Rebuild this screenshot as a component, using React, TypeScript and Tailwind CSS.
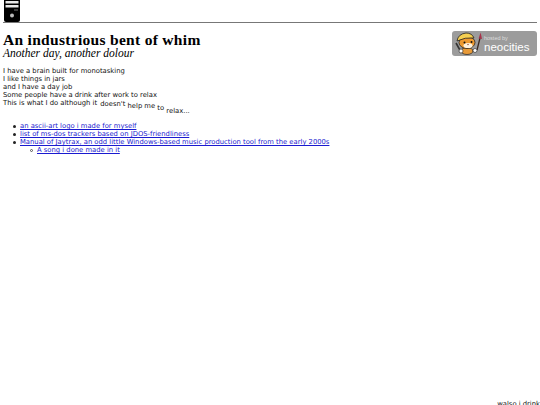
import React from 'react';

const links = [
  'an ascii-art logo i made for myself',
  'list of ms-dos trackers based on JDOS-friendliness',
  'Manual of Jaytrax, an odd little Windows-based music production tool from the early 2000s',
];

const TowerIcon = () => (
  <svg width="16" height="22" viewBox="0 0 16 22" className="ml-[1px] block">
    <path d="M0 0H16V20Q16 22 14 22H2Q0 22 0 20Z" fill="#000" />
    <rect x="1.5" y="1" width="13" height="2.5" fill="#e8e8e8" />
    <rect x="1.5" y="5" width="13" height="2.5" fill="#e8e8e8" />
    <rect x="10" y="9.5" width="4" height="1" fill="#777" />
    <circle cx="8" cy="15.5" r="2" fill="#bbb" />
  </svg>
);

const NeocitiesBadge = () => (
  <div className="flex h-[25px] w-[85px] items-center rounded-[3px] bg-[#9c9c9c]">
    <svg width="32" height="25" viewBox="0 0 32 25" className="shrink-0">
      {/* wrench */}
      <path d="M4 12L9 21" stroke="#333" strokeWidth="1.6" />
      {/* brush */}
      <path d="M25 19L28 7" stroke="#3a2a22" strokeWidth="1.3" />
      <path d="M26.6 7.5L28.6 1.5L30 8Z" fill="#a8324a" />
      {/* body */}
      <ellipse cx="15" cy="20" rx="6" ry="3.5" fill="#e89a38" stroke="#222" strokeWidth="0.7" />
      <circle cx="9" cy="20" r="2" fill="#fff" stroke="#222" strokeWidth="0.6" />
      <circle cx="23" cy="19.5" r="2" fill="#fff" stroke="#222" strokeWidth="0.6" />
      {/* head */}
      <ellipse cx="15" cy="11.5" rx="8" ry="6" fill="#ee9a30" stroke="#222" strokeWidth="0.8" />
      <ellipse cx="16" cy="14.5" rx="4.5" ry="2.6" fill="#fff4e0" />
      <circle cx="12.5" cy="11.5" r="1" fill="#111" />
      <circle cx="19.5" cy="11" r="1" fill="#111" />
      <circle cx="16" cy="13.5" r="0.7" fill="#8a3a20" />
      {/* hard hat */}
      <path d="M5 10Q6 3 14 2Q20 2 22 7Q13 6 5 10Z" fill="#f4cf52" stroke="#222" strokeWidth="0.8" />
    </svg>
    <div className="flex flex-col font-['Liberation_Sans',sans-serif] text-white">
      <span className="text-[5.5px] leading-[6px] text-[#dcdcdc]">hosted by</span>
      <span className="text-[11.5px] leading-[12px]">neocities</span>
    </div>
  </div>
);

export default function App() {
  return (
    <div className="flex h-[405px] flex-col overflow-hidden bg-white px-[3px] font-['DejaVu_Sans',sans-serif] text-[6.8px] leading-[8px] text-[#111]">
      <div className="border-b border-[#777]">
        <TowerIcon />
      </div>

      <div className="mt-[8px] flex items-start justify-between">
        <div className="pt-[1px] font-['Liberation_Serif',serif] text-black">
          <h1 className="text-[15.5px] leading-[15px] font-bold tracking-[0.3px]">An industrious bent of whim</h1>
          <p className="text-[11.5px] leading-[12px] italic">Another day, another dolour</p>
        </div>
        <NeocitiesBadge />
      </div>

      <div className="mt-[8px]">
        <p>I have a brain built for monotasking</p>
        <p>I like things in jars</p>
        <p>and I have a day job</p>
        <p>Some people have a drink after work to relax</p>
        <p className="flex items-start">
          <span className="whitespace-pre">This is what I do although it </span>
          <span className="mt-[1px] ml-[1px] whitespace-pre">doesn't </span>
          <span className="mt-[3px] whitespace-pre">help me </span>
          <span className="mt-[5px] whitespace-pre">to </span>
          <span className="mt-[8px]">relax...</span>
        </p>
      </div>

      <ul className="mt-[7px] ml-[10px]">
        {links.map((label) => (
          <li key={label} className="flex items-center gap-[4px]">
            <span className="h-[3px] w-[3px] rounded-full bg-[#222]" />
            <a href="#" className="text-[#1a1ad0] underline">{label}</a>
          </li>
        ))}
        <li className="ml-[17px] flex items-center gap-[4px]">
          <span className="h-[3px] w-[3px] rounded-full border-[0.5px] border-[#555]" />
          <a href="#" className="text-[#1a1ad0] underline">A song i done made in it</a>
        </li>
      </ul>

      <p className="mt-auto -mr-[3px] -mb-[3px] text-right whitespace-nowrap">...walso i drink</p>
    </div>
  );
}
